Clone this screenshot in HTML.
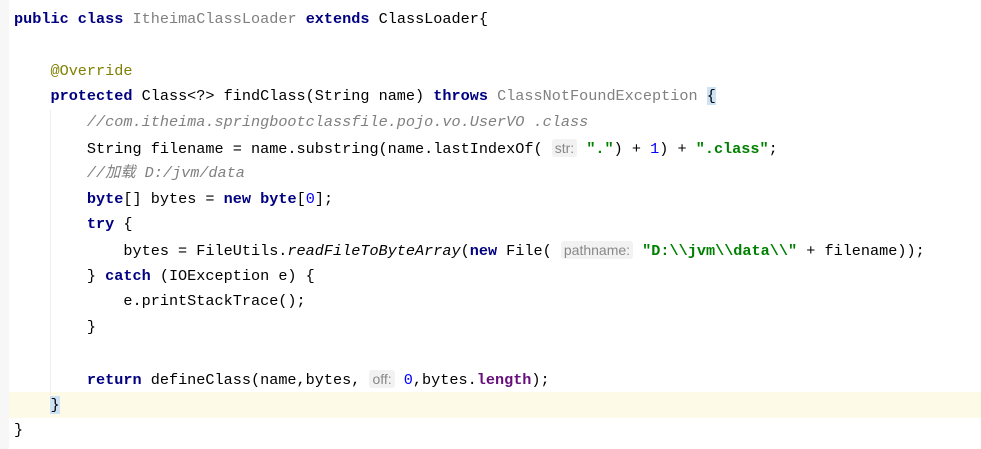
<!DOCTYPE html>
<html><head><meta charset="utf-8"><style>
html,body{margin:0;padding:0;background:#fff;width:981px;height:449px;overflow:hidden}
body{font-family:"Liberation Mono","Noto Sans CJK SC",monospace;font-size:15.2px;color:#000;position:relative}
.gut{position:absolute;left:0;top:0;width:9px;height:449px;background:#f7f7f7}
.l{position:absolute;left:14px;white-space:pre;height:25px;line-height:25px;margin-top:2px}
.k{color:#000080;font-weight:bold}
.s{color:#008000;font-weight:bold}
.n{color:#0000ff}
.c{color:#808080;font-style:italic}
.g{color:#808080}
.a{color:#808000}
.f{color:#660e7a;font-weight:bold}
.i{font-style:italic}
.h{font-family:"Liberation Sans",sans-serif;font-size:14px;color:#888;background:#f2f2f2;border-radius:3px;padding:1px 3px}
.hl{position:absolute;left:9px;right:0;top:392px;height:26px;background:#fdfbe8}
.br{background:#cde3f5}
.vl{position:absolute;width:1px;background:#eee}
</style></head><body>
<div class="gut"></div>
<div class="hl"></div>
<div class="vl" style="left:50px;top:110px;height:285px"></div>
<div class="l" style="top:5px"><span class="k">public class</span> <span class="g">ItheimaClassLoader</span> <span class="k">extends</span> ClassLoader{</div>
<div class="l" style="top:57px">    <span class="a">@Override</span></div>
<div class="l" style="top:82px">    <span class="k">protected</span> Class&lt;?&gt; findClass(String name) <span class="k">throws</span> <span class="g">ClassNotFoundException</span> <span class="br">{</span></div>
<div class="l" style="top:108px">        <span class="c">//com.itheima.springbootclassfile.pojo.vo.UserVO .class</span></div>
<div class="l" style="top:134px">        String filename = name.substring(name.lastIndexOf( <span class="h">str:</span> <span class="s">"."</span>) + <span class="n">1</span>) + <span class="s">".class"</span>;</div>
<div class="l" style="top:159px">        <span class="c">//加载 D:/jvm/data</span></div>
<div class="l" style="top:185px">        <span class="k">byte</span>[] bytes = <span class="k">new byte</span>[<span class="n">0</span>];</div>
<div class="l" style="top:210px">        <span class="k">try</span> {</div>
<div class="l" style="top:236px">            bytes = FileUtils.<span class="i">readFileToByteArray</span>(<span class="k">new</span> File( <span class="h">pathname:</span> <span class="s">"D:\\jvm\\data\\"</span> + filename));</div>
<div class="l" style="top:262px">        } <span class="k">catch</span> (IOException e) {</div>
<div class="l" style="top:287px">            e.printStackTrace();</div>
<div class="l" style="top:313px">        }</div>
<div class="l" style="top:365px">        <span class="k">return</span> defineClass(name,bytes, <span class="h">off:</span> <span class="n">0</span>,bytes.<span class="f">length</span>);</div>
<div class="l" style="top:391px">    <span class="br">}</span></div>
<div class="l" style="top:416px">}</div>
</body></html>
